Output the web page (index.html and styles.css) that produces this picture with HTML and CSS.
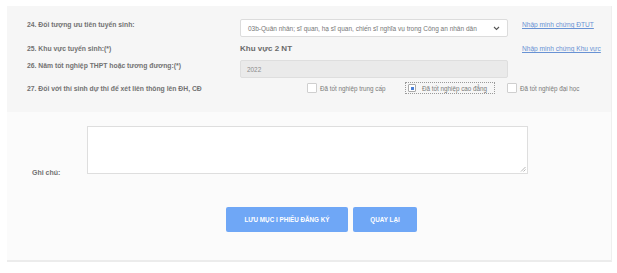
FILE: index.html
```html
<!DOCTYPE html>
<html lang="vi">
<head>
    <meta charset="UTF-8">
    <meta name="viewport" content="width=device-width, initial-scale=1.0">
    <title>Phiếu đăng ký</title>
    <link rel="stylesheet" href="styles.css">
</head>
<body>

    <div class="panel">
        <!-- Thông tin ưu tiên -->
        <div class="info">
            <div class="label label-top">24. Đối tượng ưu tiên tuyển sinh:</div>
            <div class="select">
                <span>03b-Quân nhân; sĩ quan, hạ sĩ quan, chiến sĩ nghĩa vụ trong Công an nhân dân</span>
                <svg width="7" height="5" viewBox="0 0 7 5"><path d="M1 1 L3.5 3.5 L6 1" fill="none" stroke="#555" stroke-width="1.1"/></svg>
            </div>
            <a href="#" class="proof-link link-top">Nhập minh chứng ĐTUT</a>

            <div class="label">25. Khu vực tuyển sinh:(*)</div>
            <div class="value">Khu vực 2 NT</div>
            <a href="#" class="proof-link">Nhập minh chứng Khu vực</a>

            <div class="label label-top">26. Năm tốt nghiệp THPT hoặc tương đương:(*)</div>
            <div class="input-disabled">2022</div>
            <div></div>

            <div class="label">27. Đối với thí sinh dự thi để xét liên thông lên ĐH, CĐ</div>
            <div class="checks">
                <label class="check check-1"><span class="box"></span>Đã tốt nghiệp trung cấp</label>
                <label class="check check-2 focused"><span class="box checked"><span></span></span>Đã tốt nghiệp cao đẳng</label>
                <label class="check"><span class="box"></span>Đã tốt nghiệp đại học</label>
            </div>
        </div>

        <!-- Ghi chú -->
        <div class="notes">
            <div class="note-row">
                <div class="label note-label">Ghi chú:</div>
                <div class="textarea">
                    <svg class="grip" width="6" height="6" viewBox="0 0 6 6"><path d="M5.5 1 L1 5.5 M5.5 3.5 L3.5 5.5" stroke="#999" stroke-width="0.7"/></svg>
                </div>
            </div>
            <div class="actions">
                <button class="btn btn-save">LƯU MỤC I PHIẾU ĐĂNG KÝ</button>
                <button class="btn btn-back">QUAY LẠI</button>
            </div>
        </div>
    </div>

</body>
</html>
```

FILE: styles.css
```css
/* General Styles */
body {
    font-family: "Liberation Sans", Arial, sans-serif;
    margin: 0;
    padding: 0;
    background: #ffffff;
}

/* Panel */
.panel {
    width: 604px;
    margin: 6px 0 0 7px;
    border-right: 1px solid #efefef;
    border-bottom: 2px solid #ececec;
}

/* Upper block */
.info {
    background: #f6f6f6;
    padding: 13px 0 18px 20px;
    display: grid;
    grid-template-columns: 199px 268px auto;
    grid-template-rows: 18px 15px 18px 12px;
    column-gap: 14px;
    row-gap: 4px;
    align-items: center;
}

.label {
    font-size: 6.8px;
    font-weight: bold;
    color: #727272;
    white-space: nowrap;
}

.label-top {
    align-self: start;
    padding-top: 2px;
}

.select {
    height: 16px;
    background: #fff;
    border: 1px solid #dcdcdc;
    border-radius: 2px;
    display: flex;
    align-items: center;
    justify-content: space-between;
    padding: 0 7px;
    font-size: 6.5px;
    color: #777;
}

.proof-link {
    font-size: 6.6px;
    color: #6892d4;
    text-decoration: underline;
    white-space: nowrap;
}

.link-top {
    align-self: start;
    padding-top: 2px;
}

.value {
    font-size: 8px;
    font-weight: bold;
    color: #6a6a6a;
}

.input-disabled {
    height: 16px;
    background: #eaeaea;
    border: 1px solid #dedede;
    border-radius: 2px;
    display: flex;
    align-items: center;
    padding: 0 6px;
    font-size: 6.4px;
    color: #8a8a8a;
}

/* Checkboxes */
.checks {
    grid-column: 2 / 4;
    display: flex;
    align-items: center;
    padding-left: 67px;
}

.check {
    display: flex;
    align-items: center;
    gap: 3px;
    font-size: 6.3px;
    color: #7a7a7a;
    white-space: nowrap;
}

.check-1 {
    width: 99px;
}

.check-2 {
    width: 84px;
    margin-right: 13px;
}

.box {
    width: 8px;
    height: 8px;
    background: #fff;
    border: 1px solid #cfcfcf;
    border-radius: 1px;
    display: flex;
    align-items: center;
    justify-content: center;
}

.focused {
    outline: 1px dotted #9a9a9a;
    padding: 1px 2px;
    height: 8px;
}

.box.checked {
    width: 6px;
    height: 6px;
    border-color: #aaa;
    margin-right: 3px;
}

.box.checked span {
    width: 3px;
    height: 3px;
    background: #4a7fd6;
}

/* Lower block */
.notes {
    background: #fbfbfb;
    padding: 14px 0 28px 0;
}

.note-row {
    display: flex;
    align-items: flex-end;
}

.note-label {
    box-sizing: border-box;
    width: 80px;
    padding-left: 25px;
    font-size: 7px;
    margin-bottom: -2px;
}

.textarea {
    width: 439px;
    height: 46px;
    background: #fff;
    border: 1px solid #dedede;
    position: relative;
}

.grip {
    position: absolute;
    right: 1px;
    bottom: 1px;
}

.actions {
    display: flex;
    gap: 5px;
    margin: 33px 0 0 219px;
}

.btn {
    height: 25px;
    border: none;
    border-radius: 2px;
    background: #6fa7f6;
    color: #fff;
    font-family: "Liberation Sans", Arial, sans-serif;
    font-size: 6.3px;
    font-weight: bold;
    cursor: pointer;
}

.btn-save {
    width: 122px;
}

.btn-back {
    width: 64px;
}
```
